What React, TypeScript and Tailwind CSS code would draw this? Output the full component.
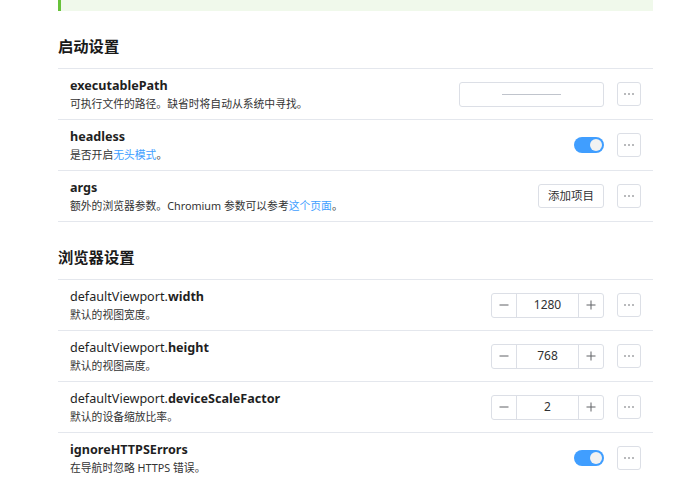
import React from "react";

const FONT = '"Noto Sans", "Noto Sans CJK SC", sans-serif';

function Dots() {
  return (
    <button className="flex h-[24px] w-[24px] items-center justify-center rounded-[3px] border border-[#dcdfe6] bg-white">
      <svg width="10" height="2" viewBox="0 0 10 2">
        <circle cx="1" cy="1" r="0.8" fill="#606266" />
        <circle cx="5" cy="1" r="0.8" fill="#606266" />
        <circle cx="9" cy="1" r="0.8" fill="#606266" />
      </svg>
    </button>
  );
}

function Toggle() {
  return (
    <div className="flex h-[16px] w-[30px] items-center justify-end rounded-full bg-[#409eff] pr-[2px]">
      <div className="h-[12px] w-[12px] rounded-full bg-[#f2f2f2]" />
    </div>
  );
}

function NumberInput({ value }: { value: string }) {
  return (
    <div className="flex h-[25px] w-[113px] items-stretch rounded-[3px] border border-[#dcdfe6] bg-white">
      <div className="flex w-[25px] items-center justify-center border-r border-[#dcdfe6]">
        <svg width="10" height="10" viewBox="0 0 10 10">
          <line x1="0.5" y1="5" x2="9.5" y2="5" stroke="#606266" strokeWidth="1" />
        </svg>
      </div>
      <div className="flex flex-1 items-center justify-center text-[12px] text-[#303133]">
        {value}
      </div>
      <div className="flex w-[25px] items-center justify-center border-l border-[#dcdfe6]">
        <svg width="10" height="10" viewBox="0 0 10 10">
          <line x1="0.5" y1="5" x2="9.5" y2="5" stroke="#606266" strokeWidth="1" />
          <line x1="5" y1="0.5" x2="5" y2="9.5" stroke="#606266" strokeWidth="1" />
        </svg>
      </div>
    </div>
  );
}

function Row({
  title,
  desc,
  control,
}: {
  title: React.ReactNode;
  desc: React.ReactNode;
  control: React.ReactNode;
}) {
  return (
    <div className="flex h-[51px] items-center border-t border-[#e4e7ed] pl-[12px] pr-[12px]">
      <div className="flex flex-1 flex-col">
        <div className="text-[12.6px] leading-[18px] text-[#1f1f1f]">{title}</div>
        <div className="text-[10.8px] leading-[17px] text-[#333333]">{desc}</div>
      </div>
      <div className="flex items-center gap-[13px]">
        {control}
        <Dots />
      </div>
    </div>
  );
}

function Heading({ children }: { children: React.ReactNode }) {
  return (
    <div className="pb-[11px] pt-[25px] text-[15.3px] font-bold leading-[21px] text-[#1a1a1a]">
      {children}
    </div>
  );
}

const Link = ({ children }: { children: React.ReactNode }) => (
  <span className="text-[#409eff]">{children}</span>
);

export default function App() {
  return (
    <div className="h-[483px] w-[690px] overflow-hidden bg-white" style={{ fontFamily: FONT }}>
      <div className="ml-[58px] w-[595px]">
        <div className="h-[11px] border-l-[3px] border-[#67c23a] bg-[#f0f9eb]" />
        <Heading>启动设置</Heading>
        <Row
          title={<b>executablePath</b>}
          desc="可执行文件的路径。缺省时将自动从系统中寻找。"
          control={
            <div className="flex h-[25px] w-[145px] items-center justify-center rounded-[3px] border border-[#dcdfe6] bg-white">
              <div className="h-px w-[59px] bg-[#c0c4cc]" />
            </div>
          }
        />
        <Row
          title={<b>headless</b>}
          desc={
            <>
              是否开启<Link>无头模式</Link>。
            </>
          }
          control={<Toggle />}
        />
        <Row
          title={<b>args</b>}
          desc={
            <>
              额外的浏览器参数。Chromium 参数可以参考<Link>这个页面</Link>。
            </>
          }
          control={
            <button className="flex h-[24px] w-[66px] items-center justify-center rounded-[3px] border border-[#dcdfe6] bg-white text-[11.5px] text-[#303133]">
              添加项目
            </button>
          }
        />
        <div className="border-t border-[#e4e7ed]" />
        <Heading>浏览器设置</Heading>
        <Row
          title={
            <>
              defaultViewport.<b>width</b>
            </>
          }
          desc="默认的视图宽度。"
          control={<NumberInput value="1280" />}
        />
        <Row
          title={
            <>
              defaultViewport.<b>height</b>
            </>
          }
          desc="默认的视图高度。"
          control={<NumberInput value="768" />}
        />
        <Row
          title={
            <>
              defaultViewport.<b>deviceScaleFactor</b>
            </>
          }
          desc="默认的设备缩放比率。"
          control={<NumberInput value="2" />}
        />
        <Row
          title={<b>ignoreHTTPSErrors</b>}
          desc="在导航时忽略 HTTPS 错误。"
          control={<Toggle />}
        />
      </div>
    </div>
  );
}
